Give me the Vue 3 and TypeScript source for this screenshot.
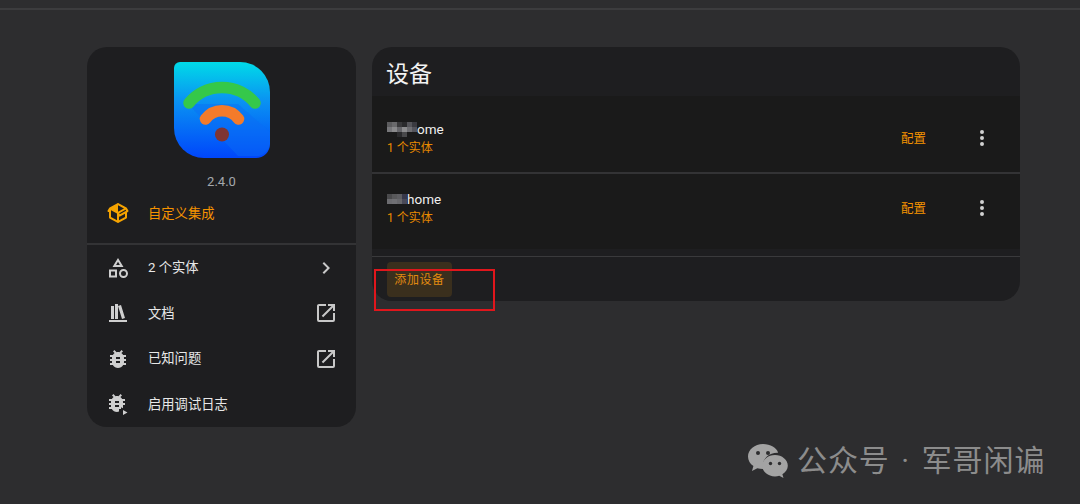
<script setup lang="ts">
interface Device {
  id: number
  suffix: string
  cols: number
  cells: string[]
}

interface SideRow {
  label: string
  icon: string
  trail?: 'chevron' | 'external'
}

const mdiShape = 'M11,13.5V21.5H3V13.5H11M9,15.5H5V19.5H9V15.5M12,2L17.5,11H6.5L12,2M12,5.86L10.08,9H13.92L12,5.86M17.5,13C20,13 22,15 22,17.5C22,20 20,22 17.5,22C15,22 13,20 13,17.5C13,15 15,13 17.5,13M17.5,15A2.5,2.5 0 0,0 15,17.5A2.5,2.5 0 0,0 17.5,20A2.5,2.5 0 0,0 20,17.5A2.5,2.5 0 0,0 17.5,15Z'
const mdiShelf = 'M9 3V18H12V3H9M12 5L16 18L19 17L15 4L12 5M5 5V18H8V5H5M3 19V21H21V19H3Z'
const mdiBug = 'M14,12H10V10H14M14,16H10V14H14M20,8H17.19C16.74,7.22 16.12,6.55 15.37,6.04L17,4.41L15.59,3L13.42,5.17C12.96,5.06 12.5,5 12,5C11.5,5 11.04,5.06 10.59,5.17L8.41,3L7,4.41L8.62,6.04C7.88,6.55 7.26,7.22 6.81,8H4V10H6.09C6.04,10.33 6,10.66 6,11V12H4V14H6V15C6,15.34 6.04,15.67 6.09,16H4V18H6.81C8.47,20.87 12.14,21.84 15,20.18C15.91,19.66 16.67,18.9 17.19,18H20V16H17.91C17.96,15.67 18,15.34 18,15V14H20V12H18V11C18,10.66 17.96,10.33 17.91,10H20V8Z'
const mdiBugPlay = 'M13,11H9V9H13M13,15H9V13H13M19,7H16.19C15.74,6.22 15.12,5.55 14.37,5.04L16,3.41L14.59,2L12.42,4.17C11.96,4.06 11.5,4 11,4C10.5,4 10.04,4.06 9.59,4.17L7.41,2L6,3.41L7.62,5.04C6.88,5.55 6.26,6.22 5.81,7H3V9H5.09C5.04,9.33 5,9.66 5,10V11H3V13H5V14C5,14.34 5.04,14.67 5.09,15H3V17H5.81C7.2,19.4 10.2,20.5 13,19.6V17H15V15.2L16.9,16.3C16.97,15.9 17,15.4 17,15V13H19V11H17V10C17,9.66 16.96,9.33 16.91,9H19V7M17,18V23L21.5,20.5L17,18Z'
const mdiExternal = 'M14,3V5H17.59L7.76,14.83L9.17,16.24L19,6.41V10H21V3M19,19H5V5H12V3H5C3.89,3 3,3.9 3,5V19A2,2 0 0,0 5,21H19A2,2 0 0,0 21,19V12H19V19Z'
const mdiChevron = 'M8.59,16.58L13.17,12L8.59,7.41L10,6L16,12L10,18L8.59,16.58Z'
const mdiDots = 'M12,16A2,2 0 0,1 14,18A2,2 0 0,1 12,20A2,2 0 0,1 10,18A2,2 0 0,1 12,16M12,10A2,2 0 0,1 14,12A2,2 0 0,1 12,14A2,2 0 0,1 10,12A2,2 0 0,1 12,10M12,4A2,2 0 0,1 14,6A2,2 0 0,1 12,8A2,2 0 0,1 10,6A2,2 0 0,1 12,4Z'
const mdiPackage = 'M2,10.96C1.5,10.68 1.35,10.07 1.63,9.59L3.13,7C3.24,6.8 3.41,6.66 3.6,6.58L11.43,2.18C11.59,2.06 11.79,2 12,2C12.21,2 12.41,2.06 12.57,2.18L20.47,6.62C20.66,6.72 20.82,6.88 20.91,7.08L22.36,9.6C22.64,10.08 22.47,10.69 22,10.96L21,11.54V16.5C21,16.88 20.79,17.21 20.47,17.38L12.57,21.82C12.41,21.94 12.21,22 12,22C11.79,22 11.59,21.94 11.43,21.82L3.53,17.38C3.21,17.21 3,16.88 3,16.5V10.96C2.7,11.13 2.32,11.14 2,10.96M12,4.15V10.85L17.96,7.5L12,4.15M5,15.91L11,19.29V12.58L5,9.21V15.91M19,15.91V12.69L14,15.59C13.67,15.77 13.3,15.76 13,15.6V19.29L19,15.91M13.85,13.36L20.13,9.73L19.55,8.72L13.27,12.35L13.85,13.36Z'

const rows: SideRow[] = [
  { label: '2 个实体', icon: mdiShape, trail: 'chevron' },
  { label: '文档', icon: mdiShelf, trail: 'external' },
  { label: '已知问题', icon: mdiBug, trail: 'external' },
  { label: '启用调试日志', icon: mdiBugPlay },
]

const devices: Device[] = [
  {
    id: 1,
    suffix: 'ome',
    cols: 6,
    cells: [
      '#5c5c5e', '#6a6a6c', '#39393b', '#2a2a2c', '#55555a', '#3a3a40',
      '#77777a', '#8a8a8c', '#66666a', '#8c8c8e', '#6e6e72', '#55555c',
      '#1a1a1a', '#1a1a1a', '#2a2a2c', '#48484a', '#1a1a1a', '#1a1a1a',
    ],
  },
  {
    id: 2,
    suffix: 'home',
    cols: 4,
    cells: [
      '#4a4a4c', '#58585a', '#5e5e62', '#38384a',
      '#6c6c70', '#707074', '#68686c', '#4a4a58',
    ],
  },
]
</script>

<template>
  <div class="page">
    <div class="topbar"></div>
    <main class="content">
      <aside class="card side">
        <div class="logo-wrap">
          <svg class="logo" viewBox="0 0 96 96" width="96" height="96">
            <defs>
              <linearGradient id="logoBg" x1="0" y1="0" x2="0" y2="1">
                <stop offset="0" stop-color="#00dbe8" />
                <stop offset="0.4" stop-color="#0a93f2" />
                <stop offset="1" stop-color="#0046fb" />
              </linearGradient>
            </defs>
            <path d="M6 0H66A30 30 0 0 1 96 30V82A14 14 0 0 1 82 96H30A30 30 0 0 1 0 66V6A6 6 0 0 1 6 0Z" fill="url(#logoBg)" />
            <path d="M14 42L64 94H82A14 14 0 0 0 96 82V70L64 42Z" fill="#0a6cf5" opacity="0.45" />
            <path d="M15 41A42.900 42.900 0 0 1 81 41" fill="none" stroke="#35c84a" stroke-width="11.500" stroke-linecap="round" />
            <path d="M31.500 57A20.500 20.500 0 0 1 64.500 57" fill="none" stroke="#f47b2a" stroke-width="11.500" stroke-linecap="round" />
            <circle cx="48" cy="72.500" r="7" fill="#7f3533" />
          </svg>
        </div>
        <div class="version">2.4.0</div>
        <div class="row custom">
          <svg class="icon" viewBox="0 0 24 24"><path :d="mdiPackage" /></svg>
          <span>自定义集成</span>
        </div>
        <div class="side-list">
          <div v-for="row in rows" :key="row.label" class="row">
            <svg class="icon" viewBox="0 0 24 24"><path :d="row.icon" /></svg>
            <span class="grow">{{ row.label }}</span>
            <svg v-if="row.trail === 'chevron'" class="trail" viewBox="0 0 24 24"><path :d="mdiChevron" /></svg>
            <svg v-else-if="row.trail === 'external'" class="trail" viewBox="0 0 24 24"><path :d="mdiExternal" /></svg>
          </div>
        </div>
      </aside>

      <section class="card devices">
        <h2 class="title">设备</h2>
        <div class="device-list">
          <div v-for="d in devices" :key="d.id" class="device">
            <div class="device-info">
              <div class="name">
                <span class="mosaic" :style="{ gridTemplateColumns: `repeat(${d.cols}, 5px)` }">
                  <i v-for="(c, i) in d.cells" :key="i" :style="{ background: c }"></i>
                </span>{{ d.suffix }}
              </div>
              <div class="sub">1 个实体</div>
            </div>
            <span class="config">配置</span>
            <svg class="dots" viewBox="0 0 24 24"><path :d="mdiDots" /></svg>
          </div>
        </div>
        <div class="footer">
          <span class="add">添加设备</span>
        </div>
      </section>
    </main>

    <div class="redbox"></div>

    <div class="watermark">
      <svg class="wechat" viewBox="0 0 42 36" width="42" height="36">
        <path d="M16 1C7.700 1 1 6.600 1 13.500c0 3.900 2.100 7.300 5.400 9.600L5 28l5.300-2.800c1.800.5 3.700.8 5.700.8h.8c-.5-1.300-.8-2.600-.8-4 0-6.900 6.400-12.300 14.200-12.300h.9C29.700 4.600 23.400 1 16 1Z" fill="#a3a3a3" />
        <path d="M28 12c-7 0-12.700 4.800-12.700 10.700S21 33.400 28 33.400c1.500 0 2.900-.2 4.200-.6L36.500 35l-1.100-3.800c3.300-2 5.400-5 5.400-8.500C40.800 16.800 35 12 28 12Z" fill="#a3a3a3" />
        <circle cx="11" cy="10" r="2" fill="#2d2d2f" />
        <circle cx="21" cy="10" r="2" fill="#2d2d2f" />
        <circle cx="23.500" cy="20.500" r="1.700" fill="#2d2d2f" />
        <circle cx="32.500" cy="20.500" r="1.700" fill="#2d2d2f" />
      </svg>
      <span class="wm-text">公众号<span class="wm-dot">·</span>军哥闲谝</span>
    </div>
  </div>
</template>

<style>
html, body { margin: 0; background: #2d2d2f; }
</style>

<style scoped>
.page {
  position: relative;
  width: 1080px;
  height: 504px;
  overflow: hidden;
  background: #2d2d2f;
  font-family: Roboto, "Noto Sans CJK SC", sans-serif;
  color: #e6e6e6;
}
.topbar { height: 8px; border-bottom: 2px solid #3c3c3e; }
.content {
  display: flex;
  align-items: flex-start;
  gap: 16px;
  padding: 37px 60px 0 87px;
}
.card { background: #1e1e20; border-radius: 20px; overflow: hidden; }
.side { width: 269px; height: 380px; flex: none; }
.logo-wrap { display: flex; justify-content: center; padding-top: 15px; }
.logo { display: block; }
.version { text-align: center; font-size: 13px; line-height: 16px; color: #a5a8ad; margin-top: 16px; }
.row {
  display: flex;
  align-items: center;
  height: 45.500px;
  padding: 0 20px 0 19px;
  font-size: 13.300px;
  color: #e8e8e8;
}
.row span { position: relative; top: -1px; }
.row .icon { width: 24px; height: 24px; margin-right: 18px; fill: #cfcfcf; flex: none; }
.custom { height: 38px; color: #f59300; margin-top: 4px; margin-bottom: 11px; }
.custom .icon { fill: #f5a300; }
.side-list { border-top: 2px solid #333335; }
.grow { flex: 1; }
.trail { width: 24px; height: 24px; fill: #c8c8c8; flex: none; margin-right: -2px; }
.devices { width: 648px; height: 254px; flex: none; }
.title {
  margin: 0;
  height: 49px;
  padding: 0 14px;
  font-size: 23px;
  line-height: 56px;
  font-weight: 400;
  color: #f2f2f2;
}
.device-list { background: #1a1a1a; }
.device {
  display: flex;
  height: 78px;
  padding: 8px 26px 0 15px;
  box-sizing: border-box;
  align-items: center;
  border-bottom: 2px solid #333335;
}
.device:last-child { border-bottom: 0; height: 75px; padding-top: 0; padding-bottom: 7px; }
.device-info { flex: 1; padding-top: 1px; }
.name { display: flex; align-items: center; height: 18px; font-size: 13.500px; color: #f0f0f0; }
.mosaic { display: grid; grid-auto-rows: 5px; }
.mosaic i { display: block; width: 5px; height: 5px; }
.sub { font-size: 12px; line-height: 18px; margin-top: 1px; color: #e88a00; }
.config { font-size: 12.500px; color: #f59300; margin-right: 44px; margin-top: -2px; }
.dots { width: 24px; height: 24px; fill: #d2d2d2; }
.footer { margin-top: 7px; border-top: 1px solid #3a3a3c; padding: 5px 15px 0; }
.add {
  display: inline-block;
  width: 65px;
  height: 35px;
  line-height: 37px;
  text-align: center;
  border-radius: 4px;
  background: #3a2f1d;
  color: #e08a10;
  font-size: 12px;
  letter-spacing: 0.600px;
}
.redbox {
  position: absolute;
  left: 374px;
  top: 269px;
  width: 121px;
  height: 42px;
  box-sizing: border-box;
  border: 2px solid #e0161c;
}
.watermark {
  position: absolute;
  left: 747px;
  top: 443px;
  display: flex;
  align-items: center;
  gap: 8px;
  color: #8c8c8c;
  font-size: 30px;
  line-height: 36px;
  white-space: nowrap;
}
.wm-text { letter-spacing: 0.900px; }
.wm-dot { display: inline-block; width: 32px; text-align: center; }
</style>
